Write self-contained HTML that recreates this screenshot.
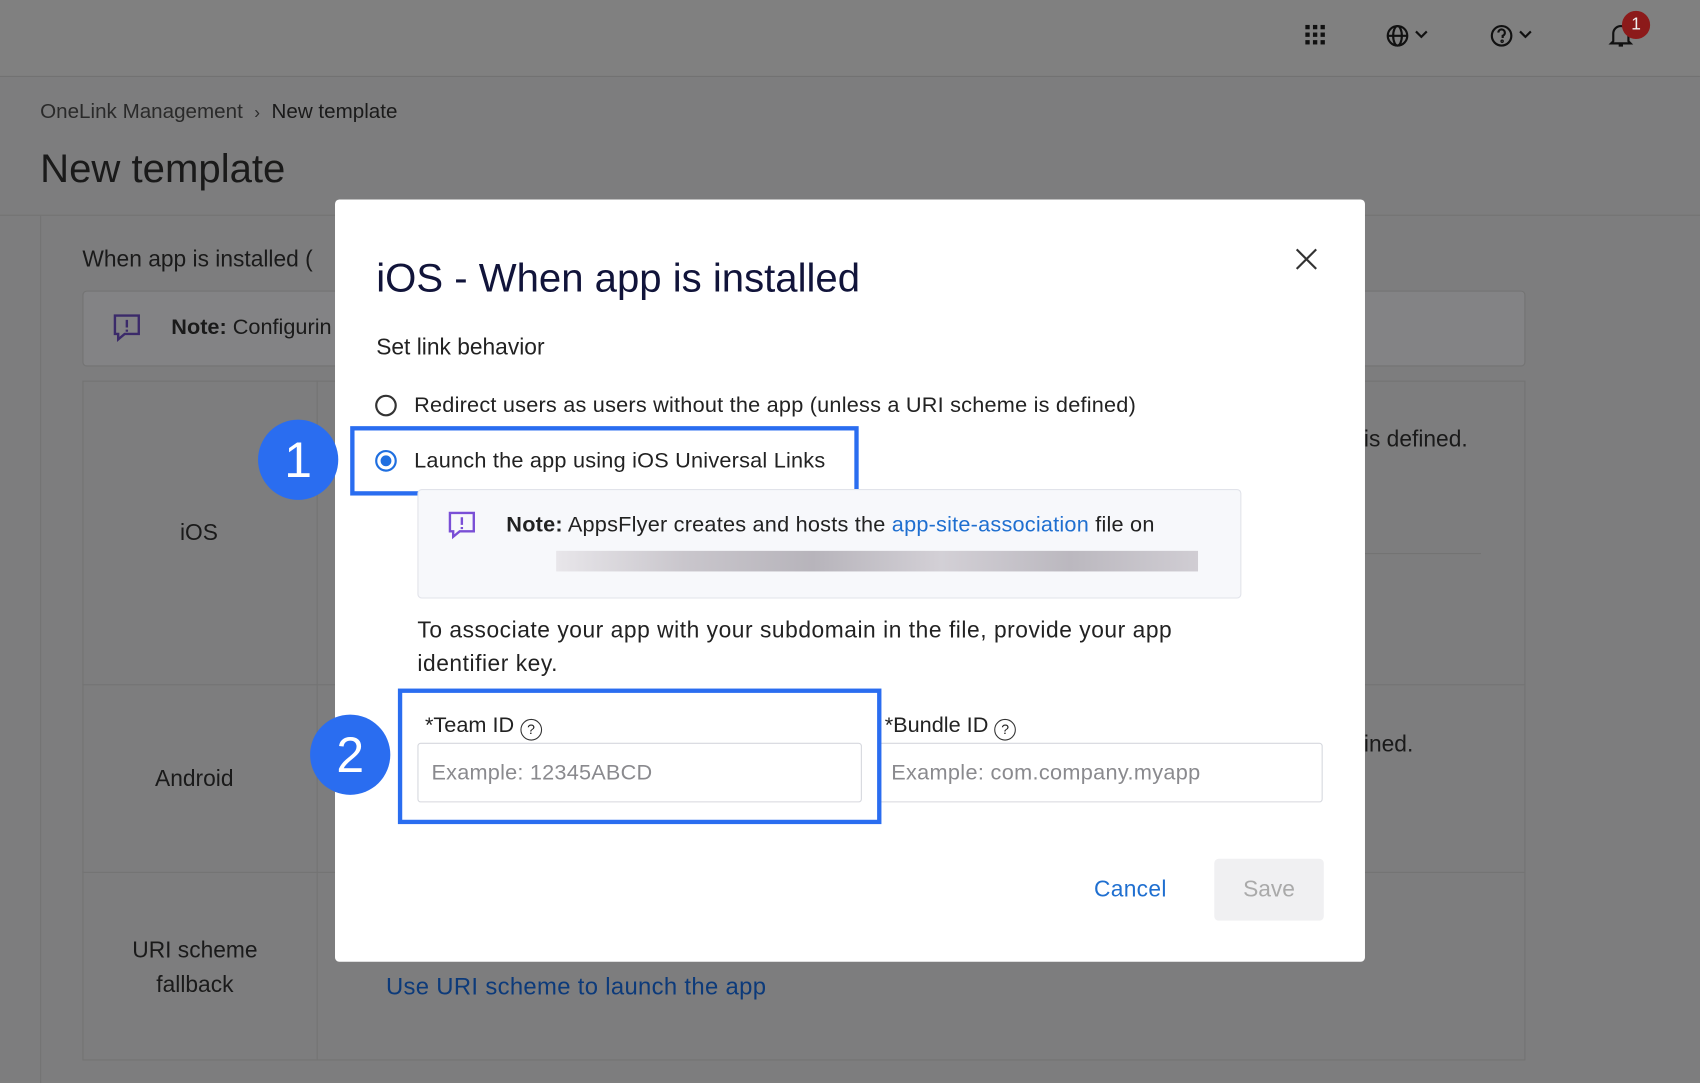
<!DOCTYPE html>
<html><head><meta charset="utf-8"><style>
html,body{margin:0;padding:0;width:1700px;height:1080px;overflow:hidden;background:#7f7f7f;font-family:"Liberation Sans",sans-serif}
#w{position:absolute;left:0;top:0;width:1568px;height:996px;transform:scale(1.08418,1.08434);transform-origin:0 0;background:#7d7d7e}
.a{position:absolute}
.t{color:#1a1a1a}
.m{margin-top:2px}
</style></head><body><div id="w">
<div class="a" style="left:0;top:0;width:1568px;height:70px;background:#808080;border-bottom:1px solid #737373"></div>
<div class="a" style="left:1204px;top:23px;width:18px;height:18px;display:grid;grid-template-columns:repeat(3,4px);gap:3px">
<i style="background:#111"></i><i style="background:#111"></i><i style="background:#111"></i><i style="background:#111"></i><i style="background:#111"></i><i style="background:#111"></i><i style="background:#111"></i><i style="background:#111"></i><i style="background:#111"></i></div>
<svg class="a" style="left:1277px;top:21px" width="46" height="24" viewBox="0 0 46 24" fill="none" stroke="#111" stroke-width="2"><circle cx="12" cy="12" r="9"/><ellipse cx="12" cy="12" rx="4" ry="9"/><path d="M3 12h18"/><path d="M29 8l5 5 5-5"/></svg>
<svg class="a" style="left:1373px;top:21px" width="46" height="24" viewBox="0 0 46 24" fill="none" stroke="#111" stroke-width="2"><circle cx="12" cy="12" r="9"/><path d="M9 9a3 3 0 1 1 4 3v2"/><circle cx="12.5" cy="17" r=".6"/><path d="M29 8l5 5 5-5"/></svg>
<svg class="a" style="left:1483px;top:20px" width="24" height="26" viewBox="0 0 24 26" fill="none" stroke="#111" stroke-width="2"><path d="M5 18V11a7 7 0 0 1 14 0v7l2 2H3z"/><path d="M10 22h4"/></svg>
<div class="a" style="left:1496px;top:10px;width:26px;height:26px;border-radius:50%;background:#8c1a1a;color:#eee;font-size:16px;text-align:center;line-height:26px">1</div>
<div class="a t" style="left:37px;top:93px;font-size:19px;color:#2a2a2a">OneLink Management &nbsp;<span style="font-size:16px">›</span>&nbsp; <span class="t">New template</span></div>
<div class="a t" style="left:37px;top:135px;font-size:37px">New template</div>
<div class="a" style="left:0;top:198px;width:1568px;height:1px;background:#737373"></div>
<div class="a" style="left:37px;top:199px;width:1px;height:800px;background:#737373"></div>
<div class="a t" style="left:76px;top:228px;font-size:21px">When app is installed (</div>
<div class="a" style="left:76px;top:268px;width:1329px;height:68px;background:#838385;border:1px solid #737373;border-radius:4px"></div>
<div class="a t" style="left:158px;top:291px;font-size:20px"><b>Note:</b> Configurin</div>
<svg class="a" style="left:103px;top:288px" width="28" height="28" viewBox="0 0 28 28" fill="none" stroke="#3b2a6a" stroke-width="2.2"><path d="M3 3h22v17H12l-6 5v-5H3z"/><path d="M14 7v7M14 16v2"/></svg>
<div class="a" style="left:76px;top:351px;width:1329px;height:625px;border:1px solid #737373"></div>
<div class="a" style="left:292px;top:351px;width:1px;height:626px;background:#737373"></div>
<div class="a" style="left:76px;top:631px;width:1330px;height:1px;background:#737373"></div>
<div class="a" style="left:76px;top:804px;width:1330px;height:1px;background:#737373"></div>
<div class="a" style="left:1258px;top:510px;width:108px;height:1px;background:#737373"></div>
<div class="a t" style="left:166px;top:480px;font-size:21px">iOS</div>
<div class="a t" style="left:143px;top:707px;font-size:21px">Android</div>
<div class="a t" style="left:122px;top:861px;font-size:21px;text-align:center;line-height:32px">URI scheme<br>fallback</div>
<div class="a t" style="left:1258px;top:394px;font-size:21px">is defined.</div>
<div class="a t" style="left:1258px;top:675px;font-size:21px">ined.</div>
<div class="a" style="left:356px;top:897px;font-size:22px;color:#0c3a7a;letter-spacing:.3px">Use URI scheme to launch the app</div>
<div class="a" style="left:309px;top:184px;width:950px;height:703px;background:#fff;border-radius:4px"></div>
<svg class="a" style="left:1193px;top:227px" width="24" height="24" viewBox="0 0 24 24" stroke="#333" stroke-width="2"><path d="M3 3l18 18M21 3L3 21"/></svg>
<div class="a" style="left:347px;top:236px;font-size:37px;color:#11143a">iOS - When app is installed</div>
<div class="a t" style="left:347px;top:309px;font-size:21px;color:#222">Set link behavior</div>
<div class="a" style="left:346px;top:364px;width:20px;height:20px;border:2px solid #333;border-radius:50%;box-sizing:border-box"></div>
<div class="a" style="left:382px;top:363px;font-size:20px;color:#222;letter-spacing:.2px">Redirect users as users without the app (unless a URI scheme is defined)</div>
<div class="a" style="left:346px;top:415px;width:20px;height:20px;border:2px solid #1f6fe0;border-radius:50%;box-sizing:border-box"><div style="margin:3px;width:10px;height:10px;border-radius:50%;background:#1f6fe0"></div></div>
<div class="a" style="left:382px;top:414px;font-size:20px;color:#222;letter-spacing:.2px">Launch the app using iOS Universal Links</div>
<div class="a" style="left:323px;top:393px;width:461px;height:56px;border:4px solid #2a6df0"></div>
<div class="a" style="left:238px;top:387px;width:74px;height:74px;border-radius:50%;background:#2a6df0;color:#fff;font-size:46px;text-align:center;line-height:74px">1</div>
<div class="a" style="left:385px;top:451px;width:758px;height:99px;background:#f7f8fb;border:1px solid #e1e3ea;border-radius:4px"></div>
<svg class="a" style="left:412px;top:470px" width="28" height="28" viewBox="0 0 28 28" fill="none" stroke="#7a4fd6" stroke-width="2.2"><path d="M3 3h22v17H12l-6 5v-5H3z"/><path d="M14 7v7M14 16v2"/></svg>
<div class="a" style="left:467px;top:473px;font-size:20px;color:#222;letter-spacing:.2px"><b>Note:</b> AppsFlyer creates and hosts the <span style="color:#1f6fd0">app-site-association</span> file on</div>
<div class="a" style="left:513px;top:508px;width:592px;height:19px;background:linear-gradient(90deg,#e8e6ea,#c9c6cc 20%,#b7b4bb 40%,#d3d0d6 60%,#bbb8bf 80%,#d0cdd3)"></div>
<div class="a" style="left:385px;top:566px;font-size:21px;color:#222;line-height:31px;letter-spacing:.5px">To associate your app with your subdomain in the file, provide your app<br>identifier key.</div>
<div class="a" style="left:392px;top:658px;font-size:20px;color:#222">*Team ID <span style="display:inline-block;width:18px;height:18px;border:1.5px solid #333;border-radius:50%;font-size:13px;text-align:center;line-height:18px;vertical-align:-2px">?</span></div>
<div class="a" style="left:816px;top:658px;font-size:20px;color:#222">*Bundle ID <span style="display:inline-block;width:18px;height:18px;border:1.5px solid #333;border-radius:50%;font-size:13px;text-align:center;line-height:18px;vertical-align:-2px">?</span></div>
<div class="a" style="left:385px;top:685px;width:410px;height:55px;border:1px solid #d6d8de;border-radius:3px;box-sizing:border-box"></div>
<div class="a" style="left:398px;top:702px;font-size:20px;color:#8a8a8e;letter-spacing:.2px">Example: 12345ABCD</div>
<div class="a" style="left:810px;top:685px;width:410px;height:55px;border:1px solid #d6d8de;border-radius:3px;box-sizing:border-box"></div>
<div class="a" style="left:822px;top:702px;font-size:20px;color:#8a8a8e;letter-spacing:.3px">Example: com.company.myapp</div>
<div class="a" style="left:367px;top:635px;width:438px;height:117px;border:4px solid #2a6df0"></div>
<div class="a" style="left:286px;top:659px;width:74px;height:74px;border-radius:50%;background:#2a6df0;color:#fff;font-size:46px;text-align:center;line-height:74px">2</div>
<div class="a" style="left:1009px;top:809px;font-size:21px;color:#1f6fd0;letter-spacing:.3px">Cancel</div>
<div class="a" style="left:1120px;top:792px;width:101px;height:57px;background:#f0f0f2;border-radius:4px;color:#aaa;font-size:21px;text-align:center;line-height:57px">Save</div>
</div></body></html>
